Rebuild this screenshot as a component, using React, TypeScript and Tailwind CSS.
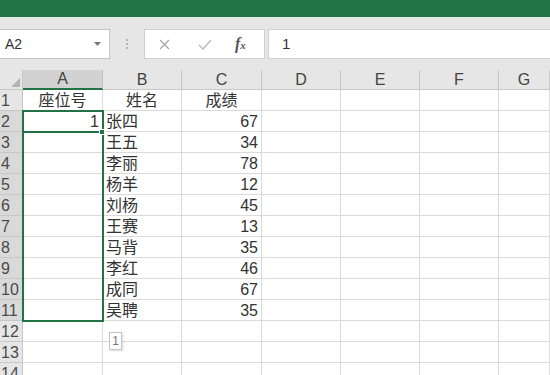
import React from "react";

const cols = ["A", "B", "C", "D", "E", "F", "G"];

type Row = { a: string; b: string; c: string; head?: boolean };

const rows: Row[] = [
  { a: "座位号", b: "姓名", c: "成绩", head: true },
  { a: "1", b: "张四", c: "67" },
  { a: "", b: "王五", c: "34" },
  { a: "", b: "李丽", c: "78" },
  { a: "", b: "杨羊", c: "12" },
  { a: "", b: "刘杨", c: "45" },
  { a: "", b: "王赛", c: "13" },
  { a: "", b: "马背", c: "35" },
  { a: "", b: "李红", c: "46" },
  { a: "", b: "成同", c: "67" },
  { a: "", b: "吴聘", c: "35" },
  { a: "", b: "", c: "" },
  { a: "", b: "", c: "" },
  { a: "", b: "", c: "" },
];

const cell = "h-[21px] border-r border-b border-[#dadada] bg-white text-[16px] leading-[21px] text-[#333] overflow-hidden whitespace-nowrap";

const App: React.FC = () => {
  return (
    <div className="w-[550px] h-[375px] overflow-hidden bg-white font-['Liberation_Sans','Noto_Sans_CJK_SC',sans-serif]">
      {/* title bar strip */}
      <div className="h-[17px] bg-[#217346]" />

      {/* formula bar */}
      <div className="h-[53px] bg-[#e6e6e6] flex items-start pt-[12px]">
        <div className="w-[110px] h-[30px] bg-white border border-[#c6c6c6] border-l-0 flex items-center justify-between pl-[5px] pr-[8px]">
          <span className="text-[14px] text-[#333]">A2</span>
          <svg width="7" height="4" viewBox="0 0 7 4">
            <polygon points="0,0 7,0 3.5,4" fill="#777" />
          </svg>
        </div>
        <div className="w-[34px] h-[30px] flex flex-col items-center justify-center gap-[2px]">
          <span className="w-[2px] h-[2px] bg-[#b5b5b5]" />
          <span className="w-[2px] h-[2px] bg-[#b5b5b5]" />
          <span className="w-[2px] h-[2px] bg-[#b5b5b5]" />
        </div>
        <div className="w-[121px] h-[30px] bg-white border border-[#d0d0d0] flex items-center">
          <svg width="11" height="11" viewBox="0 0 11 11" className="ml-[14px]">
            <path d="M1 1 L10 10 M10 1 L1 10" stroke="#a6a6a6" strokeWidth="1.3" />
          </svg>
          <svg width="14" height="11" viewBox="0 0 14 11" className="ml-[28px]">
            <path d="M1 6 L5 10 L13 1" stroke="#b8b8b8" strokeWidth="1.3" fill="none" />
          </svg>
          <span className="ml-[23px] text-[16px] italic font-bold text-[#555] font-['Liberation_Serif',serif] leading-none">
            f<span className="text-[11px]">x</span>
          </span>
        </div>
        <div className="ml-[3px] flex-1 h-[30px] bg-white border border-[#d0d0d0] border-r-0 flex items-center pl-[13px]">
          <span className="text-[15px] text-[#333]">1</span>
        </div>
      </div>

      {/* sheet grid */}
      <div className="relative">
        <div className="grid grid-cols-[23px_80px_79px_80px_79px_79px_79px_1fr]">
          {/* column headers */}
          <div className="h-[20px] bg-[#e6e6e6] border-r border-b border-[#c8c8c8] flex items-end justify-end pr-[2px] pb-[2px]">
            <svg width="9" height="9" viewBox="0 0 9 9">
              <polygon points="9,0 9,9 0,9" fill="#b4b4b4" />
            </svg>
          </div>
          {cols.map((c) => (
            <div
              key={c}
              className={
                c === "A"
                  ? "h-[20px] bg-[#d2d2d2] border-r border-[#c0c0c0] border-b-2 border-b-[#217346] flex items-center justify-center text-[16px] text-[#444] leading-none"
                  : "h-[20px] bg-[#e6e6e6] border-r border-b border-[#c8c8c8] flex items-center justify-center text-[16px] text-[#444] leading-none"
              }
            >
              {c}
            </div>
          ))}

          {rows.map((r, i) => {
            const n = i + 1;
            const sel = n >= 2 && n <= 11;
            return (
              <React.Fragment key={n}>
                <div
                  className={
                    sel
                      ? "h-[21px] bg-[#d9d9d9] border-r border-[#9fb8a8] border-b border-b-[#c8c8c8] text-[16px] leading-[21px] text-[#4a4a4a] pl-[1px] overflow-hidden"
                      : "h-[21px] bg-[#e6e6e6] border-r border-b border-[#c8c8c8] text-[16px] leading-[21px] text-[#4a4a4a] pl-[1px] overflow-hidden"
                  }
                >
                  {n}
                </div>
                <div className={`${cell} ${r.head ? "text-center" : "text-right pr-[3px]"}`}>{r.a}</div>
                <div className={`${cell} ${r.head ? "text-center" : "text-left pl-[3px]"}`}>{r.b}</div>
                <div className={`${cell} ${r.head ? "text-center" : "text-right pr-[3px]"}`}>{r.c}</div>
                <div className={cell} />
                <div className={cell} />
                <div className={cell} />
                <div className={cell} />
              </React.Fragment>
            );
          })}
        </div>

        {/* selection range A2:A11 */}
        <div className="absolute left-[22px] top-[40px] w-[82px] h-[212px] border-2 border-[#217346] pointer-events-none" />
        {/* active cell A2 bottom edge */}
        <div className="absolute left-[22px] top-[61px] w-[82px] h-[2px] bg-[#217346]" />
        {/* fill handle */}
        <div className="absolute left-[99px] top-[59px] w-[6px] h-[6px] bg-[#217346] border border-white" />

        {/* auto fill options */}
        <div className="absolute left-[109px] top-[262px] w-[13px] h-[18px] bg-white border border-[#c4c4c4] shadow-[1px_1px_2px_rgba(0,0,0,0.15)] flex items-center justify-center text-[12px] text-[#777] leading-none">
          1
        </div>
      </div>
    </div>
  );
};

export default App;
